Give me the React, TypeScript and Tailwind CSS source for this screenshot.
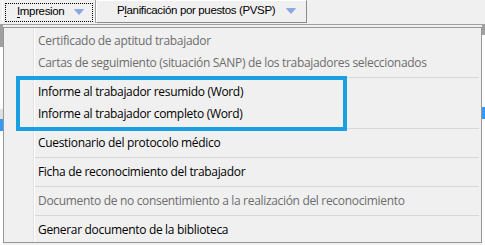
import React from "react";

const Arrow = () => (
  <svg width="10" height="6" viewBox="0 0 10 6" className="shrink-0">
    <path d="M0.5 0.5 L9.5 0.5 L5 5.5 Z" fill="#8aa6e6" stroke="#7393d8" strokeWidth="0.6" />
  </svg>
);

type Item = { label: string; disabled?: boolean } | { sep: true };

const items: Item[] = [
  { label: "Certificado de aptitud trabajador", disabled: true },
  { label: "Cartas de seguimiento (situación SANP) de los trabajadores seleccionados", disabled: true },
  { sep: true },
  { label: "Informe al trabajador resumido (Word)" },
  { label: "Informe al trabajador completo (Word)" },
  { sep: true },
  { label: "Cuestionario del protocolo médico" },
  { sep: true },
  { label: "Ficha de reconocimiento del trabajador" },
  { sep: true },
  { label: "Documento de no consentimiento a la realización del reconocimiento", disabled: true },
  { sep: true },
  { label: "Generar documento de la biblioteca" },
];

export default function App() {
  return (
    <div className="relative w-[485px] h-[245px] bg-white overflow-hidden">
      {/* toolbar */}
      <div
        className="h-[25px] bg-[#f0f0f0] border-b border-[#a0a0a0] flex items-start text-[11.5px] tracking-[-0.35px] text-black whitespace-nowrap"
        style={{ fontFamily: '"Liberation Sans", Arial, sans-serif' }}
      >
        <div className="ml-[2px] w-[94px] h-[23px] border-l border-white border-r border-r-[#a0a0a0] flex items-center pl-[2px] pt-[1px]">
          <div className="w-[88px] h-[19px] border border-dotted border-black flex items-center pl-[11px] gap-[10px]">
            <span>
              <span className="underline underline-offset-2">I</span>mpresion
            </span>
            <Arrow />
          </div>
        </div>
        <div className="w-[211px] h-[23px] border-t border-l border-white border-r border-b border-r-[#8a8a8a] border-b-[#8a8a8a] flex items-center pl-[20px] gap-[11px] pb-[1px]">
          <span>
            P<span className="underline underline-offset-2">l</span>anificación por puestos (PVSP)
          </span>
          <Arrow />
        </div>
      </div>

      {/* background content behind the menu */}
      <div className="flex h-[220px] bg-[#f0f0f0]">
        <div className="w-[3px] flex flex-col">
          <div className="h-[22px] bg-[#a0a0a0]" />
          <div className="h-[62px] bg-white" />
          <div className="h-[10px] bg-[#e0e0e0]" />
          <div className="h-[12px] bg-[#3399ff]" />
          <div className="flex-1 bg-white" />
        </div>
        <div className="flex-1" />
        <div className="w-[3px] flex flex-col">
          <div className="h-[10px] bg-[#a0a0a0]" />
          <div className="h-[72px] bg-white" />
          <div className="h-[12px] bg-[#3399ff]" />
          <div className="flex-1 bg-white" />
        </div>
      </div>

      {/* popup menu */}
      <div
        className="absolute left-[3px] top-[27px] w-[479px] h-[216px] bg-[#f0f0f0] border border-[#979797] flex text-[12px]"
        style={{ fontFamily: '"Open Sans", "Noto Sans", sans-serif' }}
      >
        <div className="w-[30px] border-r border-[#e2e2e2] shrink-0" />
        <div className="flex-1 flex flex-col pt-[2px] pr-[2px] border-l border-white">
          {items.map((it, i) =>
            "sep" in it ? (
              <div key={i} className="h-[7px] flex items-center">
                <div className="h-px w-full bg-[#d7d7d7]" />
              </div>
            ) : (
              <div
                key={i}
                className={`h-[22px] flex items-center pl-[3px] whitespace-nowrap tracking-[-0.32px] ${
                  it.disabled ? "text-[#6d6d6d]" : "text-black"
                }`}
              >
                {it.label}
              </div>
            )
          )}
        </div>
      </div>

      {/* highlight box */}
      <div className="absolute left-[16px] top-[76px] w-[331px] h-[55px] border-[4px] border-[#1a9fe0]" />
    </div>
  );
}
